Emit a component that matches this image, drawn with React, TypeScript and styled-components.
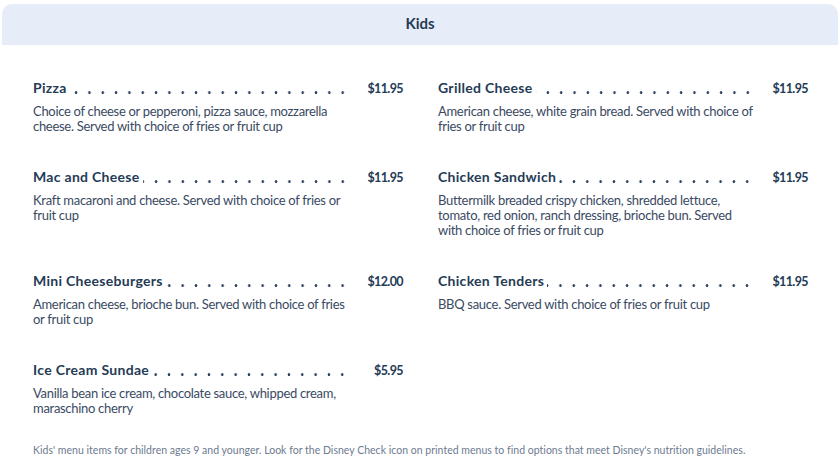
import styled, { createGlobalStyle } from "styled-components";

const GlobalStyle = createGlobalStyle`
  body {
    margin: 0;
    background: #ffffff;
    font-family: Lato, "Noto Sans", sans-serif;
    color: #253b56;
  }
`;

type Item = {
  name: string;
  price: string;
  description: string;
};

const items: Item[] = [
  {
    name: "Pizza",
    price: "$11.95",
    description:
      "Choice of cheese or pepperoni, pizza sauce, mozzarella cheese. Served with choice of fries or fruit cup",
  },
  {
    name: "Grilled Cheese",
    price: "$11.95",
    description:
      "American cheese, white grain bread. Served with choice of fries or fruit cup",
  },
  {
    name: "Mac and Cheese",
    price: "$11.95",
    description:
      "Kraft macaroni and cheese. Served with choice of fries or fruit cup",
  },
  {
    name: "Chicken Sandwich",
    price: "$11.95",
    description:
      "Buttermilk breaded crispy chicken, shredded lettuce, tomato, red onion, ranch dressing, brioche bun. Served with choice of fries or fruit cup",
  },
  {
    name: "Mini Cheeseburgers",
    price: "$12.00",
    description:
      "American cheese, brioche bun. Served with choice of fries or fruit cup",
  },
  {
    name: "Chicken Tenders",
    price: "$11.95",
    description: "BBQ sauce. Served with choice of fries or fruit cup",
  },
  {
    name: "Ice Cream Sundae",
    price: "$5.95",
    description:
      "Vanilla bean ice cream, chocolate sauce, whipped cream, maraschino cherry",
  },
];

const Page = styled.div`
  padding: 4px 2px 0;
`;

const SectionHeader = styled.div`
  height: 41px;
  box-sizing: border-box;
  padding-bottom: 4px;
  background: #e6edf8;
  border-radius: 10px 10px 0 0;
  display: flex;
  align-items: center;
  justify-content: center;
`;

const SectionTitle = styled.h2`
  margin: 0;
  font-size: 15px;
  font-weight: 700;
  color: #253b56;
`;

const MenuGrid = styled.div`
  display: grid;
  grid-template-columns: 370px 370px;
  column-gap: 35px;
  row-gap: 33px;
  padding: 33px 0 0 31px;
`;

const MenuItem = styled.div`
  display: flex;
  flex-direction: column;
`;

const ItemRow = styled.div`
  display: flex;
  align-items: baseline;
  height: 20px;
  line-height: 20px;
`;

const ItemName = styled.span`
  font-size: 14px;
  font-weight: 700;
  color: #253b56;
  white-space: nowrap;
  letter-spacing: 0.3px;
`;

// dotted leader, dots pinned to the right end like the printed menu
const Leader = styled.span`
  flex: 1;
  align-self: stretch;
  margin-left: 3px;
  background-image: radial-gradient(
    circle at 50% 14.6px,
    #2d4260 1.1px,
    transparent 1.6px
  );
  background-size: 13.33px 20px;
  background-position: right -4px top 0;
  background-repeat: repeat-x;
`;

const Price = styled.span`
  width: 58px;
  flex: none;
  text-align: right;
  font-size: 12.5px;
  font-weight: 700;
  letter-spacing: -0.6px;
  color: #253b56;
`;

const Description = styled.p`
  margin: 6px 0 0;
  max-width: 320px;
  font-size: 13px;
  line-height: 15px;
  letter-spacing: -0.3px;
  color: #3a4a63;
`;

const Footnote = styled.p`
  margin: 28px 0 0 31px;
  font-size: 10.5px;
  color: #6d7b90;
  letter-spacing: 0.02px;
`;

const App = () => {
  return (
    <>
      <GlobalStyle />
      <Page>
        <SectionHeader>
          <SectionTitle>Kids</SectionTitle>
        </SectionHeader>
        <MenuGrid>
          {items.map((item) => (
            <MenuItem key={item.name}>
              <ItemRow>
                <ItemName>{item.name}</ItemName>
                <Leader />
                <Price>{item.price}</Price>
              </ItemRow>
              <Description>{item.description}</Description>
            </MenuItem>
          ))}
        </MenuGrid>
        <Footnote>
          Kids' menu items for children ages 9 and younger. Look for the Disney
          Check icon on printed menus to find options that meet Disney's
          nutrition guidelines.
        </Footnote>
      </Page>
    </>
  );
};

export default App;
